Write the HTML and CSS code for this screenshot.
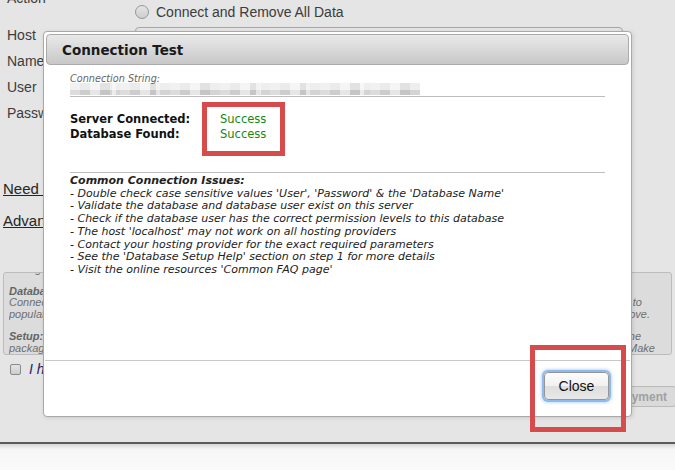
FILE: index.html
```html
<!DOCTYPE html>
<html lang="en">
<head>
<meta charset="utf-8">
<title>Connection Test</title>
<link rel="stylesheet" href="styles.css">
</head>
<body>
<div class="screen">
  <div class="page">
    <div class="form-row row-action">
      <span class="label">Action</span>
      <label class="radio-opt"><span class="radio"></span>Connect and Remove All Data</label>
    </div>
    <div class="form-row"><span class="label">Host</span><span class="input"></span></div>
    <div class="form-row"><span class="label">Name</span><span class="input"></span></div>
    <div class="form-row"><span class="label">User</span><span class="input"></span></div>
    <div class="form-row"><span class="label">Password</span><span class="input"></span></div>

    <div class="links">
      <a href="#">Need help?</a>
      <a href="#">Advanced Options</a>
    </div>

    <div class="notice">
      <div class="notice-inner">
        <p class="nl"><span>settings are correct before continuing with the installation.</span></p>
        <div class="para">
          <p class="nl"><b>Database Connection:</b></p>
          <p class="nl"><span>Connecting to a database server requires the correct host, name, user and password</span><span class="end end-to">to</span></p>
          <p class="nl"><span>populate the new database tables. Please test the connection with the values</span><span class="end end-ove">above.</span></p>
        </div>
        <div class="para">
          <p class="nl"><span><b>Setup:</b> The installer will create the database tables on this machine</span><span class="end end-ne">machine</span></p>
          <p class="nl"><span>package installs into a database with existing tables, those tables may be overwritten.</span><span class="end">Make</span></p>
        </div>
      </div>
    </div>

    <div class="accept">
      <span class="check"></span>
      <span class="accept-text">I have read and accept all terms &amp; notices</span>
    </div>

    <div class="actions">
      <button class="deploy" type="button">Run Deployment</button>
    </div>
  </div>

  <div class="overlay"></div>

  <div class="dialog">
    <div class="titlebar"><span class="title">Connection Test</span></div>
    <div class="body">
      <div class="connstr">
        <div class="connstr-label">Connection String:</div>
        <div class="connstr-value" aria-hidden="true"></div>
      </div>
      <dl class="status">
        <dt>Server Connected:</dt><dd>Success</dd>
        <dt>Database Found:</dt><dd>Success</dd>
      </dl>
      <div class="issues">
        <h3>Common Connection Issues:</h3>
        <ul>
          <li>- Double check case sensitive values 'User', 'Password' &amp; the 'Database Name'</li>
          <li>- Validate the database and database user exist on this server</li>
          <li>- Check if the database user has the correct permission levels to this database</li>
          <li>- The host 'localhost' may not work on all hosting providers</li>
          <li>- Contact your hosting provider for the exact required parameters</li>
          <li>- See the 'Database Setup Help' section on step 1 for more details</li>
          <li>- Visit the online resources 'Common FAQ page'</li>
        </ul>
      </div>
    </div>
    <div class="footer">
      <button class="close" type="button">Close</button>
    </div>
  </div>

  <div class="mark mark-success"></div>
  <div class="mark mark-close"></div>
</div>
<div class="chrome"></div>
</body>
</html>
```
FILE: styles.css
```css
* { box-sizing: border-box; }
html, body { margin: 0; padding: 0; }
body {
  width: 675px;
  height: 470px;
  overflow: hidden;
  background: #fafafa;
  font-family: "Liberation Sans", Arial, sans-serif;
}
.screen {
  position: relative;
  height: 442px;
  overflow: hidden;
  background: #fff;
}

/* background page */
.page {
  margin-top: -12px;
  padding-left: 7px;
  color: #444;
  font-size: 14px;
}
.form-row {
  display: grid;
  grid-template-columns: 128px 1fr;
  height: 26px;
}
.form-row .label { line-height: 26px; }
.row-action { height: 34px; }
.row-action .label { line-height: 20px; align-self: start; }
.radio-opt {
  display: flex;
  align-items: center;
  gap: 7px;
  margin-top: 14px;
  height: 20px;
  line-height: 20px;
  font-size: 14px;
}
.radio {
  width: 14px;
  height: 14px;
  border-radius: 50%;
  border: 1px solid #a8a8a8;
  background: linear-gradient(#fff, #e6e6e6);
}
.input {
  display: block;
  margin-top: 5px;
  width: 488px;
  height: 20px;
  border: 1px solid #b8b8b8;
  border-radius: 4px;
  background: #fff;
}
.links {
  margin-top: 54px;
  margin-left: -4px;
  display: flex;
  flex-direction: column;
  align-items: flex-start;
  gap: 14px;
}
.links a {
  font-size: 15px;
  line-height: 18px;
  color: #2a2a2a;
  text-decoration: underline;
}
.notice {
  margin-top: 42px;
  margin-left: -4px;
  width: 669px;
  height: 83px;
  border: 1px solid #d2d2d2;
  border-radius: 3px;
  background: #f5f5f5;
  overflow: hidden;
  padding: 0 16px 0 5px;
  font-size: 11px;
  line-height: 11.7px;
  font-style: italic;
  color: #7c7c7c;
}
.notice-inner { margin-top: -9px; }
.nl {
  margin: 0;
  display: flex;
  justify-content: space-between;
  white-space: nowrap;
  overflow: hidden;
}
.nl b { color: #707070; }
.para { margin-top: 10px; }
.end { background: #f5f5f5; padding-left: 4px; }
.end-to { margin-right: 13px; }
.end-ove { margin-right: 5px; }
.end-ne { margin-right: 14px; }
.accept {
  display: flex;
  align-items: center;
  gap: 8px;
  margin: 8px 0 0 3px;
  height: 12px;
}
.check {
  width: 11px;
  height: 11px;
  border: 1px solid #9a9a9a;
  border-radius: 2px;
  background: linear-gradient(#fff, #e4e4e4);
}
.accept-text {
  font-style: italic;
  color: #1c2a7a;
  font-size: 14px;
}
.actions {
  display: flex;
  justify-content: flex-end;
  margin-top: 11px;
}
.deploy {
  margin-right: -1px;
  height: 21px;
  padding: 0 8px;
  border: 1px solid #d0d0d0;
  border-radius: 3px;
  background: #f3f3f3;
  font-family: "Liberation Sans", Arial, sans-serif;
  font-size: 12px;
  font-weight: bold;
  color: #b4b4b4;
}

.overlay {
  position: absolute;
  inset: 0;
  background: rgba(0, 0, 0, 0.1);
}

/* dialog */
.dialog {
  position: absolute;
  left: 43px;
  top: 31px;
  width: 589px;
  height: 386px;
  border: 1px solid #a9a9a9;
  border-radius: 4px;
  background: #fff;
  padding: 2px;
  display: flex;
  flex-direction: column;
  font-family: "DejaVu Sans", Verdana, sans-serif;
  box-shadow: 1px 1px 4px rgba(0, 0, 0, 0.12);
}
.titlebar {
  flex: none;
  height: 31px;
  border: 1px solid #aaa;
  border-radius: 4px;
  background: linear-gradient(#e9e9e9, #c8c8c8);
  padding-left: 15px;
  display: flex;
  align-items: center;
}
.title {
  font-weight: bold;
  font-size: 13.5px;
  color: #1a1a1a;
}
.body {
  flex: 1;
  padding: 8px 24px 0;
}
.connstr {
  border-bottom: 1px solid #bdbdbd;
  padding-bottom: 1px;
}
.connstr-label {
  font-size: 9.7px;
  line-height: 12px;
  font-style: italic;
  color: #666;
}
.connstr-value {
  margin-top: -2px;
  width: 350px;
  height: 12px;
  background:
    linear-gradient(90deg,
      transparent 0 42px, rgba(255,255,255,.55) 42px 46px,
      transparent 46px 86px, rgba(255,255,255,.55) 86px 90px,
      transparent 90px 186px, rgba(255,255,255,.55) 186px 191px,
      transparent 191px 236px, rgba(255,255,255,.55) 236px 240px,
      transparent 240px 290px, rgba(255,255,255,.55) 290px 294px,
      transparent 294px),
    repeating-linear-gradient(90deg,
      rgba(255,255,255,.3) 0 10px, rgba(0,0,0,0) 10px 20px,
      rgba(255,255,255,.5) 20px 30px, rgba(0,0,0,.04) 30px 40px,
      rgba(255,255,255,.15) 40px 50px),
    linear-gradient(#ebebeb 0 7px, #cdcdcd 7px 12px);
}
.status {
  margin: 15px 0 0;
  display: grid;
  grid-template-columns: 150px auto;
  font-size: 11.5px;
  line-height: 14.5px;
}
.status dt { font-weight: bold; color: #111; }
.status dd { margin: 0; color: #138a13; }
.issues {
  margin-top: 31px;
  border-top: 1px solid #bdbdbd;
  padding-top: 2px;
  font-size: 11px;
  line-height: 12.7px;
  font-style: italic;
  color: #222;
}
.issues h3 {
  margin: 0;
  font-size: 11px;
  font-weight: bold;
}
.issues ul {
  list-style: none;
  margin: 0;
  padding: 0;
}
.footer {
  flex: none;
  height: 54px;
  margin: 0 -1px;
  border-top: 1px solid #c8c8c8;
  display: flex;
  justify-content: flex-end;
  align-items: flex-start;
  padding: 11px 21px 0 0;
}
.close {
  width: 65px;
  height: 28px;
  padding: 0;
  border: 1px solid #959595;
  border-radius: 4px;
  background: linear-gradient(#fdfdfd 0%, #f0f0f0 50%, #dedede 51%, #e8e8e8 100%);
  box-shadow: 0 0 0 2px #8fbbec, 0 0 3px 3px rgba(120, 170, 230, 0.45);
  font-family: "Liberation Sans", Arial, sans-serif;
  font-size: 14px;
  color: #111;
}

/* annotation marks */
.mark {
  position: absolute;
  border: 5px solid #d64c4c;
}
.mark-success { left: 202px; top: 102px; width: 83px; height: 54px; }
.mark-close { left: 530px; top: 345px; width: 96px; height: 87px; }

.chrome {
  height: 28px;
  border-top: 2px solid #5c5c5c;
  background: linear-gradient(#d6d6d6, #f6f6f6 5px, #fafafa);
}
```
